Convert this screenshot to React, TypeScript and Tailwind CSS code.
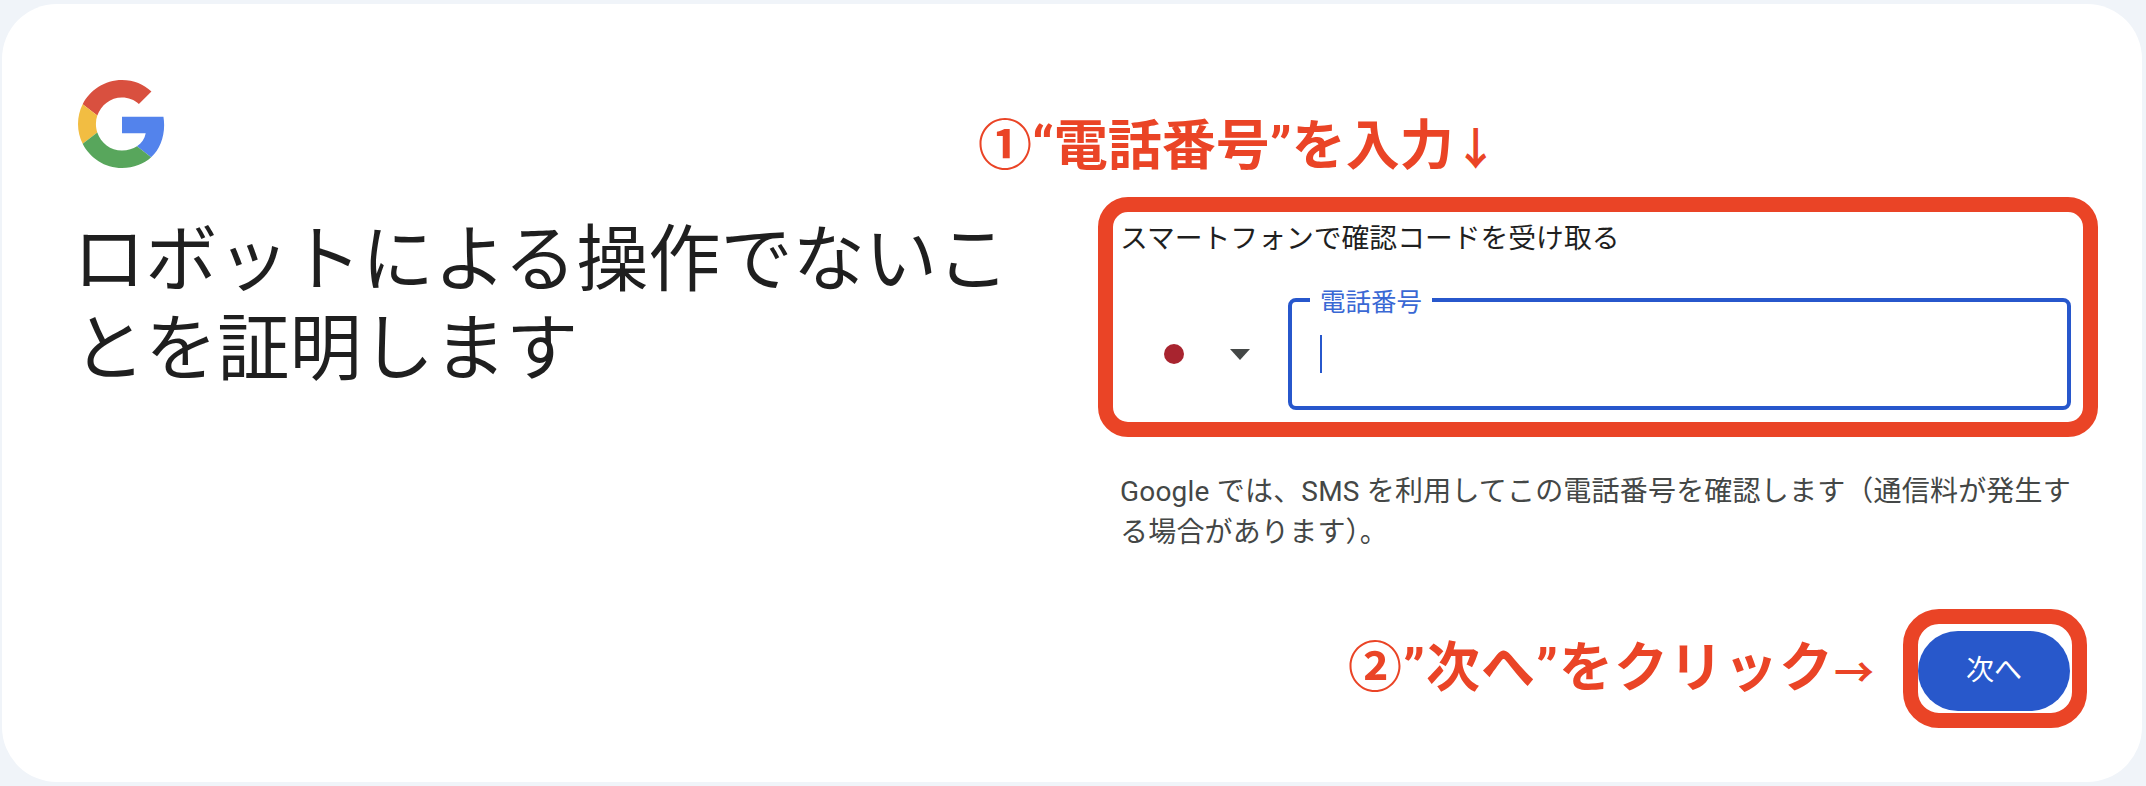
const jaFont = "font-['Roboto','Noto_Sans_CJK_JP',sans-serif]";

function GoogleLogo() {
  return (
    <svg viewBox="0 0 48 48" className="block h-[88px] w-[88px]">
      <path fill="#d9503f" d="M24 9.5c3.54 0 6.71 1.22 9.21 3.6l6.85-6.85C35.9 2.38 30.47 0 24 0 14.62 0 6.51 5.38 2.56 13.22l7.98 6.19C12.43 13.72 17.74 9.5 24 9.5z" />
      <path fill="#5383ec" d="M46.98 24.55c0-1.57-.15-3.09-.38-4.55H24v9.02h12.94c-.58 2.96-2.26 5.48-4.78 7.18l7.73 6c4.51-4.18 7.09-10.36 7.09-17.65z" />
      <path fill="#f2bd42" d="M10.53 28.59c-.48-1.45-.76-2.99-.76-4.59s.27-3.14.76-4.59l-7.98-6.19C.92 16.46 0 20.12 0 24c0 3.88.92 7.54 2.56 10.78l7.97-6.19z" />
      <path fill="#58a65c" d="M24 48c6.48 0 11.93-2.13 15.89-5.81l-7.73-6c-2.15 1.45-4.92 2.3-8.16 2.3-6.26 0-11.57-4.22-13.47-9.91l-7.98 6.19C6.51 42.62 14.62 48 24 48z" />
    </svg>
  );
}

export default function App() {
  return (
    <div lang="ja" className={`h-[786px] w-[2146px] overflow-hidden bg-[#f0f4f9] pl-[2px] pt-[4px] ${jaFont}`}>
      <div className="relative flex h-[778px] w-[2140px] rounded-[55px] bg-white">
        {/* left column */}
        <div className="w-[1096px] shrink-0 pl-[71px] pt-[76px]">
          <div className="pl-[5px]">
            <GoogleLogo />
          </div>
          <h1 className="mt-[48px] w-[950px] text-[72.2px] leading-[89px] font-normal text-[#1f1f1f]">
            ロボットによる操作でないことを証明します
          </h1>
        </div>

        {/* annotation 1 */}
        <div className="absolute left-[976px] top-[113px] text-[54px] leading-[60px] font-bold whitespace-nowrap text-[#ea4426]">
          ①“電話番号”を入力<span className="text-[44px]">↓</span>
        </div>

        {/* right column */}
        <div className="w-[1000px] pt-[193px]">
          <div className="h-[240px] rounded-[30px] border-[15px] border-[#ea4426] pl-[7px] pr-[12px]">
            <p className="pt-[8px] text-[27.8px] leading-[38px] text-[#1f1f1f]">
              スマートフォンで確認コードを受け取る
            </p>
            <div className="mt-[40px] flex">
              <div className="flex h-[112px] w-[168px] shrink-0 items-center pl-[44px]">
                <span className="h-[20px] w-[20px] rounded-full bg-[#a8242f]" />
                <span className="ml-[46px] h-0 w-0 border-x-[10px] border-t-[11px] border-x-transparent border-t-[#444746]" />
              </div>
              <div className="relative h-[112px] flex-1 rounded-[8px] border-[4px] border-[#2757cc]">
                <span className="absolute left-[18px] top-[-18px] bg-white px-[10px] text-[25.5px] leading-[36px] text-[#3a68d4]">
                  電話番号
                </span>
                <span className="absolute left-[28px] top-[33px] h-[38px] w-[2px] bg-[#2757cc]" />
              </div>
            </div>
          </div>

          <p className="mt-[34px] w-[980px] pl-[22px] text-[28px] leading-[41px] tracking-[0.2px] text-[#444746]">
            Google では、SMS を利用してこの電話番号を確認します（通信料が発生する場合があります）。
          </p>

          <div className="mt-[56px] flex items-center justify-end pr-[11px]">
            <span className="mr-[28px] pt-[6px] text-[54px] leading-[56px] font-bold tracking-[1px] whitespace-nowrap text-[#ea4426]">
              ②”次へ”をクリック<span className="text-[40px]">→</span>
            </span>
            <div className="h-[119px] w-[184px] rounded-[36px] border-[15px] border-[#ea4426] pr-[2px] pt-[7px]">
              <button className="h-[80px] w-full rounded-full bg-[#2858cb] text-[28px] text-white">
                次へ
              </button>
            </div>
          </div>
        </div>
      </div>
    </div>
  );
}
